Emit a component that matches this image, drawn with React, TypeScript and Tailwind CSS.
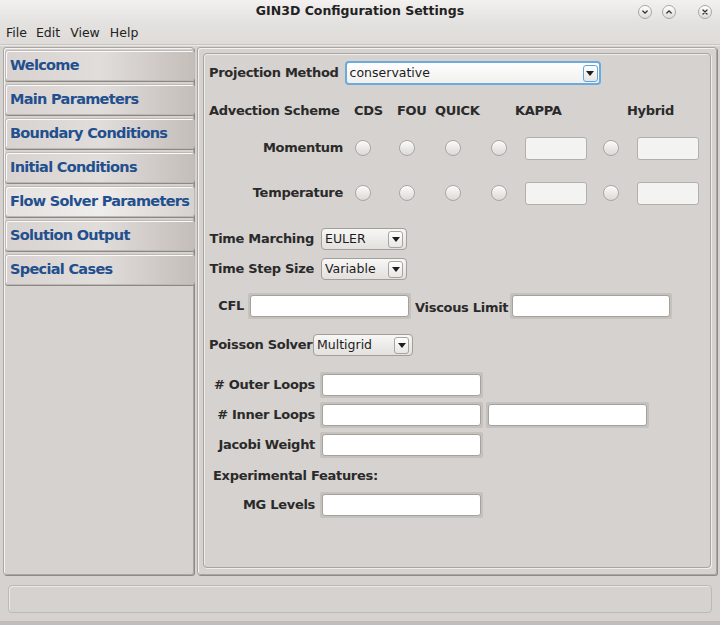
import React from "react";

const labelFont = { fontFamily: '"DejaVu Sans", sans-serif' };

function Radio() {
  return (
    <div className="w-[16px] h-[16px] rounded-full border border-[#a9a5a1] bg-gradient-to-b from-[#fbfbfa] to-[#dcd9d6] shadow-[inset_0_1px_0_#ffffff] shrink-0" />
  );
}

function SmallBox() {
  return (
    <div className="w-[62px] h-[23px] rounded-[3px] border border-[#b3afab] bg-[#f3f3f2] shrink-0" />
  );
}

function Input({ w }: { w: number }) {
  return (
    <div className="p-[2px] bg-[#c5c1bd] rounded-[2px] shrink-0" style={{ width: w + 4 }}>
      <div className="h-[22px] rounded-[3px] border border-[#a5a19d] bg-white" />
    </div>
  );
}

function Arrow({ blue }: { blue?: boolean }) {
  return (
    <div
      className={
        "w-[15px] h-[17px] rounded-[3px] border flex items-center justify-center bg-gradient-to-b from-white to-[#e8e6e4] " +
        (blue ? "border-[#62a5dc]" : "border-[#a8a4a0]")
      }
    >
      <svg width="8" height="5" viewBox="0 0 8 5">
        <path d="M0 0 L8 0 L4 5 Z" fill="#1e1e1e" />
      </svg>
    </div>
  );
}

function Combo({ w, text }: { w: number; text: string }) {
  return (
    <div
      className="h-[22px] rounded-[4px] border border-[#a29e9a] bg-gradient-to-b from-[#f7f7f6] to-[#e3e0dd] flex items-center pl-[3px] pr-[3px] shrink-0"
      style={{ width: w }}
    >
      <span className="flex-1 text-[12.5px] text-[#1c1c1c]" style={labelFont}>
        {text}
      </span>
      <Arrow />
    </div>
  );
}

function Label({ children, w, right }: { children: React.ReactNode; w?: number; right?: boolean }) {
  return (
    <span
      className={"text-[13px] font-bold text-[#2a2a2a] whitespace-nowrap shrink-0 tracking-[-0.3px] " + (right ? "text-right" : "")}
      style={{ ...labelFont, width: w }}
    >
      {children}
    </span>
  );
}

function WinBtn({ kind }: { kind: "down" | "up" | "x" }) {
  return (
    <div className="w-[14px] h-[14px] rounded-full border border-[#a9a6a3] bg-gradient-to-b from-white to-[#dedbd8] flex items-center justify-center">
      <svg width="8" height="8" viewBox="0 0 8 8" fill="none" stroke="#333" strokeWidth="1.3" strokeLinecap="round">
        {kind === "down" && <path d="M1.8 3 L4 5.2 L6.2 3" />}
        {kind === "up" && <path d="M1.8 5 L4 2.8 L6.2 5" />}
        {kind === "x" && <path d="M2 2 L6 6 M6 2 L2 6" />}
      </svg>
    </div>
  );
}

const navItems = [
  "Welcome",
  "Main Parameters",
  "Boundary Conditions",
  "Initial Conditions",
  "Flow Solver Parameters",
  "Solution Output",
  "Special Cases",
];

export default function App() {
  return (
    <div className="w-[720px] h-[625px] bg-[#d6d2cf] flex flex-col overflow-hidden">
      {/* title bar */}
      <div className="h-[22px] bg-gradient-to-b from-[#f2f1f0] to-[#e4e2e0] grid grid-cols-[1fr_auto_1fr] items-center">
        <div />
        <div className="text-[12.5px] font-bold text-[#222]" style={labelFont}>
          GIN3D Configuration Settings
        </div>
        <div className="flex justify-end items-center pr-[8px] pt-[1px]">
          <WinBtn kind="down" />
          <div className="w-[10px]" />
          <WinBtn kind="up" />
          <div className="w-[22px]" />
          <WinBtn kind="x" />
        </div>
      </div>
      {/* menu bar */}
      <div className="h-[22px] bg-gradient-to-b from-[#e4e2e0] to-[#dedbd8] flex items-center pl-[6px] text-[12.5px] text-[#222]" style={labelFont}>
        <span className="mr-[9px]">File</span>
        <span className="mr-[10px]">Edit</span>
        <span className="mr-[10px]">View</span>
        <span>Help</span>
      </div>
      <div className="h-[2px] bg-[#c9c5c1] border-b border-[#ebe9e7]" />

      {/* body */}
      <div className="flex px-[3px] pt-[1px] gap-[3px] h-[529px]">
        {/* left panel */}
        <div className="w-[191px] rounded-[3px] border border-[#aaa6a2] shadow-[inset_1px_1px_0_#f4f2f1,1px_1px_0_#8e8a86] flex flex-col gap-[3px] pt-[2px] pl-[1px]">
          {navItems.map((n, i) => {
            const sel = i === 4;
            return (
              <div
                key={n}
                className={
                  "h-[31px] w-[190px] rounded-[3px] border border-[#bdb8b4] shadow-[inset_1px_1px_0_#fbfaf9,0_1px_0_#8c8884] flex items-center pl-[4px] " +
                  (sel
                    ? "bg-gradient-to-r from-[#e4e1df] via-[#efedeb] to-[#d6d2cf]"
                    : "bg-gradient-to-r from-[#d8d3d0] via-[#e1dddb] to-[#c4beba]")
                }
              >
                <span className="text-[14.5px] font-bold text-[#224f8d] tracking-[-0.7px] whitespace-nowrap" style={labelFont}>
                  {n}
                </span>
              </div>
            );
          })}
        </div>

        {/* right panel */}
        <div className="flex-1 rounded-[3px] border border-[#aaa6a2] shadow-[inset_1px_1px_0_#f4f2f1,1px_1px_0_#8e8a86] p-[5px] pb-[6px]">
          <div className="h-full rounded-[4px] border border-[#a8a4a0] shadow-[inset_1px_1px_0_#efedeb,1px_1px_0_#f0eeec] pl-[5px] pt-[7px] flex flex-col">
            {/* Projection */}
            <div className="h-[24px] flex items-center">
              <Label>Projection Method</Label>
              <div className="ml-[6px] w-[256px] h-[24px] rounded-[4px] border-2 border-[#6aabdf] bg-gradient-to-b from-white to-[#f1f0ef] flex items-center pl-[3px] pr-[1px]">
                <span className="flex-1 text-[12.5px] text-[#1c1c1c]" style={labelFont}>
                  conservative
                </span>
                <Arrow blue />
              </div>
            </div>
            {/* advection header */}
            <div className="h-[24px] mt-[14px] flex items-center">
              <Label w={145}>Advection Scheme</Label>
              <Label w={43}>CDS</Label>
              <Label w={38}>FOU</Label>
              <Label w={80}>QUICK</Label>
              <Label w={112}>KAPPA</Label>
              <Label>Hybrid</Label>
            </div>
            {[
              ["Momentum", 13],
              ["Temperature", 21],
            ].map(([l, mt]) => (
              <div key={l as string} className="h-[24px] flex items-center" style={{ marginTop: mt as number }}>
                <Label w={134} right>
                  {l}
                </Label>
                <div className="ml-[12px]"><Radio /></div>
                <div className="ml-[28px]"><Radio /></div>
                <div className="ml-[30px]"><Radio /></div>
                <div className="ml-[30px]"><Radio /></div>
                <div className="ml-[18px]"><SmallBox /></div>
                <div className="ml-[16px]"><Radio /></div>
                <div className="ml-[18px]"><SmallBox /></div>
              </div>
            ))}
            {/* Time marching */}
            <div className="h-[24px] mt-[22px] flex items-center">
              <Label w={105} right>Time Marching</Label>
              <div className="ml-[7px]"><Combo w={86} text="EULER" /></div>
            </div>
            <div className="h-[24px] mt-[6px] flex items-center">
              <Label w={105} right>Time Step Size</Label>
              <div className="ml-[7px]"><Combo w={86} text="Variable" /></div>
            </div>
            {/* CFL */}
            <div className="h-[24px] mt-[13px] flex items-center">
              <Label w={35} right>CFL</Label>
              <div className="ml-[4px]"><Input w={159} /></div>
              <div className="ml-[4px]"><Label>Viscous Limit</Label></div>
              <div className="ml-[2px]"><Input w={158} /></div>
            </div>
            {/* Poisson */}
            <div className="h-[24px] mt-[15px] flex items-center">
              <Label w={98}>Poisson Solver</Label>
              <div className="ml-[6px]"><Combo w={100} text="Multigrid" /></div>
            </div>
            <div className="h-[24px] mt-[16px] flex items-center">
              <Label w={106} right># Outer Loops</Label>
              <div className="ml-[5px]"><Input w={159} /></div>
            </div>
            <div className="h-[24px] mt-[6px] flex items-center">
              <Label w={106} right># Inner Loops</Label>
              <div className="ml-[5px]"><Input w={159} /></div>
              <div className="ml-[3px]"><Input w={159} /></div>
            </div>
            <div className="h-[24px] mt-[6px] flex items-center">
              <Label w={106} right>Jacobi Weight</Label>
              <div className="ml-[5px]"><Input w={159} /></div>
            </div>
            <div className="h-[24px] mt-[7px] flex items-center pl-[4px]">
              <Label>Experimental Features:</Label>
            </div>
            <div className="h-[24px] mt-[5px] flex items-center">
              <Label w={106} right>MG Levels</Label>
              <div className="ml-[5px]"><Input w={159} /></div>
            </div>
          </div>
        </div>
      </div>

      {/* status bar */}
      <div className="mt-[10px] mx-[8px] h-[28px] rounded-[4px] border border-[#bdb9b5] shadow-[inset_1px_1px_0_#ebe9e7]" />
      <div className="flex-1" />
      <div className="h-[4px] bg-[#c3bcb8]" />
    </div>
  );
}
